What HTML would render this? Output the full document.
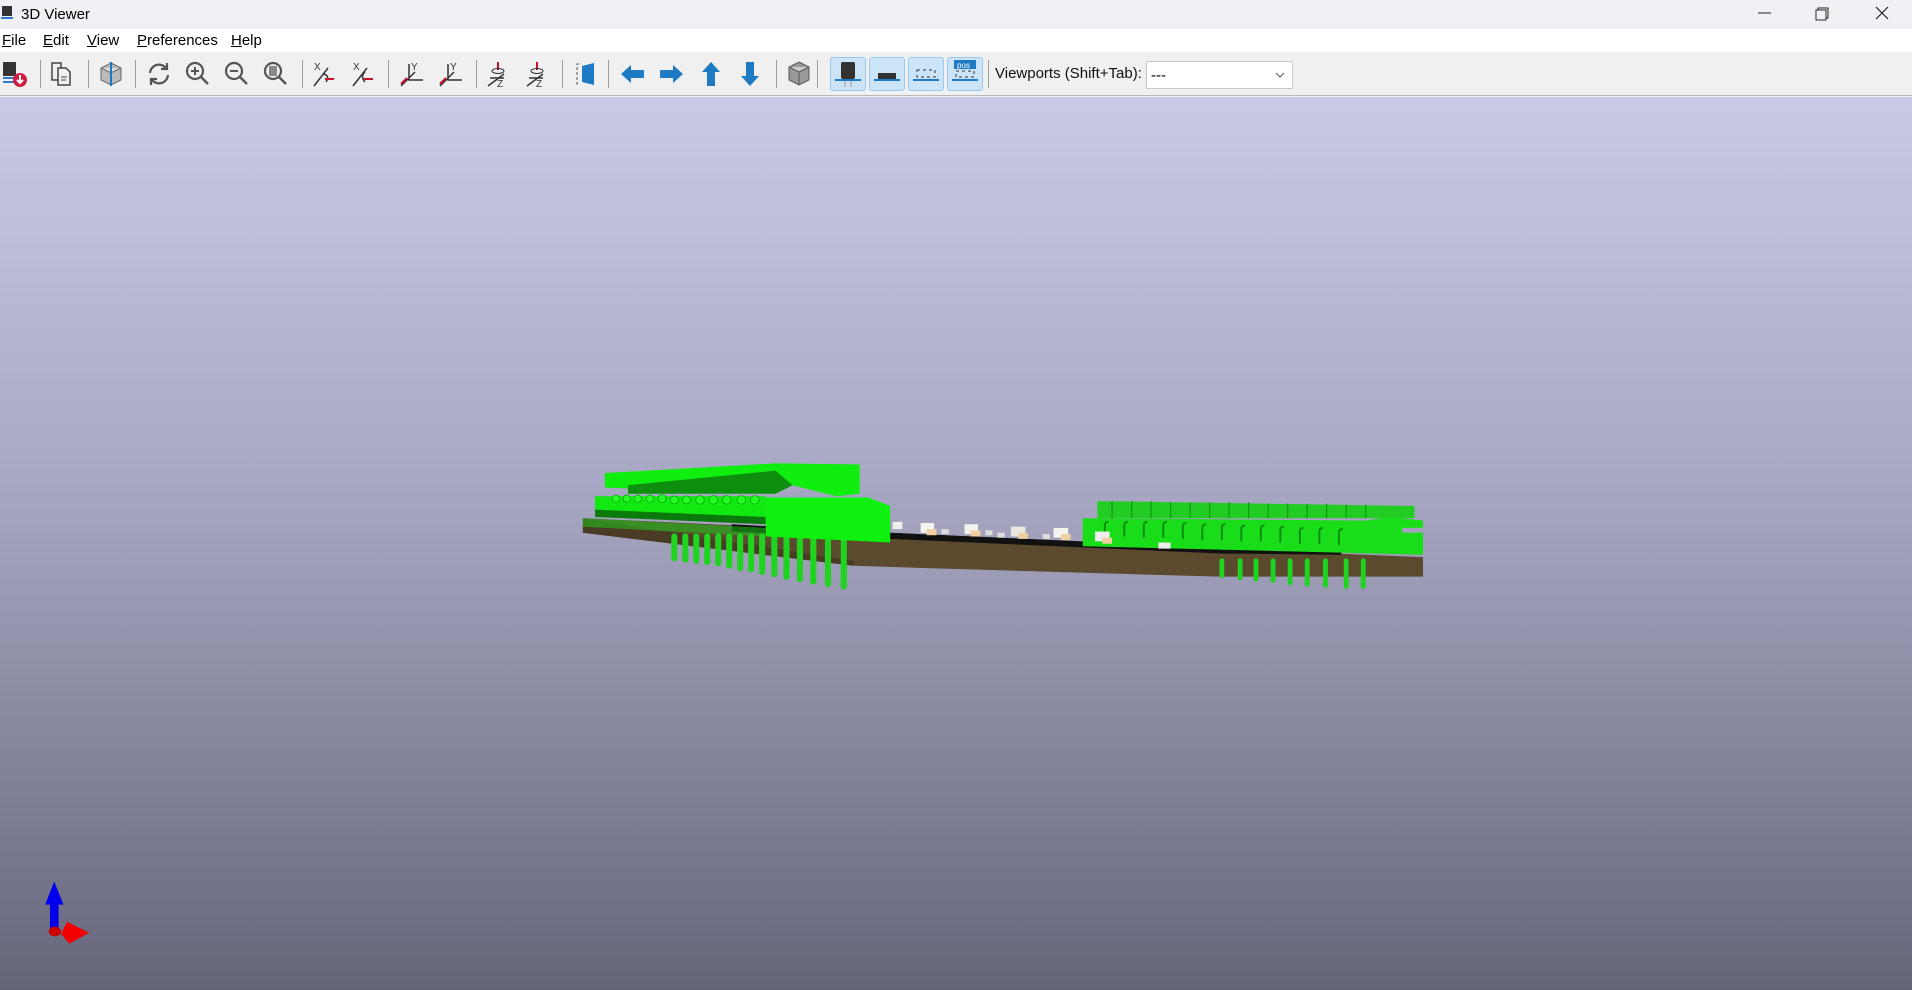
<!DOCTYPE html>
<html><head><meta charset="utf-8"><style>
*{margin:0;padding:0;box-sizing:border-box}
body{width:1912px;height:990px;overflow:hidden;font-family:"Liberation Sans",sans-serif;background:#f0f0f0;position:relative}
#title{position:absolute;left:0;top:0;width:1912px;height:29px;background:#eff1f5;font-size:15px}
#menu{position:absolute;left:0;top:29px;width:1912px;height:23px;background:#fff;font-size:15px}
#menu span{position:absolute;top:3px}
#tb{position:absolute;left:0;top:52px;width:1912px;height:44px;background:#f0f0f0;border-bottom:1px solid #b8b8b8}
#vp{position:absolute;left:0;top:97px;width:1912px;height:893px;background:linear-gradient(#cacae6,#a6a6c2 45%,#65657a)}
.sep{position:absolute;top:8px;width:1px;height:28px;background:#a0a0a0}
.ic{position:absolute;top:8px}
.tg{position:absolute;top:5px;width:36px;height:34px;background:#cce4f7;border:1px solid #99c9ef;border-radius:3px}
</style></head><body>
<div id="title">
<svg style="position:absolute;left:1px;top:6px" width="12" height="16"><rect x="1" y="0" width="10" height="10" fill="#333"/><rect x="0" y="11" width="12" height="2" fill="#2a7bd0"/></svg>
<span style="position:absolute;left:21px;top:6px">3D Viewer</span>
<svg style="position:absolute;left:1756px;top:6px" width="150" height="18"><line x1="2" y1="7" x2="15" y2="7" stroke="#222" stroke-width="1"/><rect x="60" y="4" width="10" height="10" fill="none" stroke="#222"/><path d="M62 4V2h10v10h-2" fill="none" stroke="#222"/><path d="M120 1l12 12M132 1l-12 12" stroke="#222" stroke-width="1.2"/></svg>
</div>
<div id="menu">
<span style="left:2px"><u>F</u>ile</span><span style="left:43px"><u>E</u>dit</span><span style="left:87px"><u>V</u>iew</span><span style="left:137px"><u>P</u>references</span><span style="left:231px"><u>H</u>elp</span>
</div>
<div id="tb">
<svg class="ic" style="left:1px" width="28" height="28"><rect x="2" y="2" width="13" height="14" fill="#333"/><rect x="2" y="17" width="14" height="2" fill="#2a7bd0"/><rect x="2" y="21" width="14" height="2" fill="#2a7bd0"/><circle cx="19" cy="20" r="7" fill="#d01f3c"/><path d="M19 15v8M16 20l3 3 3-3" stroke="#fff" stroke-width="2" fill="none"/></svg>
<div class="sep" style="left:40px"></div>
<svg class="ic" style="left:49px" width="26" height="28"><path d="M3 3h9v17H3z" fill="none" stroke="#444" stroke-width="1.5"/><path d="M9 8h8l4 4v13H9z" fill="#f0f0f0" stroke="#444" stroke-width="1.5"/><path d="M12 17h6M12 20h5" stroke="#444"/></svg>
<div class="sep" style="left:88px"></div>
<svg class="ic" style="left:98px" width="26" height="28"><path d="M13 3l10 5v12l-10 5-10-5V8z" fill="#bbb" stroke="#666"/><path d="M3 8l10 5 10-5" fill="#ddd" stroke="#666"/><line x1="13" y1="2" x2="13" y2="26" stroke="#1f7ac4" stroke-width="2"/></svg>
<div class="sep" style="left:135px"></div>
<svg class="ic" style="left:145px" width="28" height="28"><path d="M5 13a9 9 0 0 1 16-5M23 15a9 9 0 0 1-16 5" fill="none" stroke="#555" stroke-width="2.2"/><path d="M22 3v6h-6M6 25v-6h6" fill="none" stroke="#555" stroke-width="2.2"/></svg>
<svg class="ic" style="left:184px" width="28" height="28"><circle cx="11" cy="11" r="8" fill="none" stroke="#555" stroke-width="2.2"/><path d="M17 17l7 7" stroke="#555" stroke-width="2.5"/><path d="M7 11h8M11 7v8" stroke="#555" stroke-width="2"/></svg>
<svg class="ic" style="left:223px" width="28" height="28"><circle cx="11" cy="11" r="8" fill="none" stroke="#555" stroke-width="2.2"/><path d="M17 17l7 7" stroke="#555" stroke-width="2.5"/><path d="M7 11h8" stroke="#555" stroke-width="2"/></svg>
<svg class="ic" style="left:262px" width="28" height="28"><circle cx="11" cy="11" r="8" fill="none" stroke="#555" stroke-width="2.2"/><path d="M17 17l7 7" stroke="#555" stroke-width="2.5"/><rect x="7" y="6" width="8" height="10" fill="#888"/></svg>
<div class="sep" style="left:302px"></div>
<svg class="ic" style="left:310px" width="30" height="28"><text x="4" y="10" font-size="10" fill="#333" font-family="Liberation Sans">X</text><path d="M4 26L18 8M14 14q6 2 2 8" stroke="#333" stroke-width="1.5" fill="none"/><path d="M15 19h9" stroke="#c8102e" stroke-width="2"/></svg>
<svg class="ic" style="left:349px" width="30" height="28"><text x="4" y="10" font-size="10" fill="#333" font-family="Liberation Sans">X</text><path d="M4 26L18 8M16 12q-5 4 0 10" stroke="#333" stroke-width="1.5" fill="none"/><path d="M15 19h9" stroke="#c8102e" stroke-width="2"/></svg>
<div class="sep" style="left:388px"></div>
<svg class="ic" style="left:397px" width="30" height="28"><text x="14" y="10" font-size="10" fill="#333" font-family="Liberation Sans">Y</text><path d="M12 4v16h14M4 26L18 12" stroke="#333" stroke-width="1.5" fill="none"/><path d="M4 24l6-6" stroke="#c8102e" stroke-width="2"/></svg>
<svg class="ic" style="left:436px" width="30" height="28"><text x="14" y="10" font-size="10" fill="#333" font-family="Liberation Sans">Y</text><path d="M12 4v16h14M4 26L18 12" stroke="#333" stroke-width="1.5" fill="none"/><path d="M4 24l6-6" stroke="#c8102e" stroke-width="2"/></svg>
<div class="sep" style="left:476px"></div>
<svg class="ic" style="left:484px" width="30" height="28"><path d="M14 2v8" stroke="#c8102e" stroke-width="2"/><ellipse cx="14" cy="11" rx="6" ry="2.5" fill="none" stroke="#333"/><path d="M4 26l16-12M6 18h14" stroke="#333" stroke-width="1.5"/><text x="13" y="27" font-size="10" fill="#333" font-family="Liberation Sans">Z</text></svg>
<svg class="ic" style="left:523px" width="30" height="28"><path d="M14 2v8" stroke="#c8102e" stroke-width="2"/><ellipse cx="14" cy="11" rx="6" ry="2.5" fill="none" stroke="#333"/><path d="M4 26l16-12M6 18h14" stroke="#333" stroke-width="1.5"/><text x="13" y="27" font-size="10" fill="#333" font-family="Liberation Sans">Z</text></svg>
<div class="sep" style="left:562px"></div>
<svg class="ic" style="left:573px" width="26" height="28"><path d="M6 4h-2v20h2" fill="none" stroke="#555" stroke-dasharray="3 2"/><path d="M9 6l12-3v22l-12-3z" fill="#1f7ac4"/></svg>
<div class="sep" style="left:608px"></div>
<svg class="ic" style="left:619px" width="28" height="28"><path d="M2 14l10-9v5h13v8H12v5z" fill="#1f7ac4"/></svg>
<svg class="ic" style="left:657px" width="28" height="28"><path d="M26 14l-10-9v5H3v8h13v5z" fill="#1f7ac4"/></svg>
<svg class="ic" style="left:697px" width="28" height="28"><path d="M14 2l9 10h-5v14h-8V12H5z" fill="#1f7ac4"/></svg>
<svg class="ic" style="left:736px" width="28" height="28"><path d="M14 26l9-10h-5V2h-8v14H5z" fill="#1f7ac4"/></svg>
<div class="sep" style="left:776px"></div>
<svg class="ic" style="left:786px" width="26" height="28"><path d="M13 2l10 5v13l-10 5-10-5V7z" fill="#999" stroke="#555"/><path d="M3 7l10 5 10-5M13 12v13" fill="#ccc" stroke="#555"/></svg>
<div class="sep" style="left:817px"></div>
<div class="tg" style="left:830px"><svg width="34" height="32"><rect x="10" y="4" width="14" height="17" rx="2" fill="#333"/><rect x="4" y="21" width="26" height="2" fill="#1f7ac4"/><path d="M14 23v6M20 23v6" stroke="#999"/></svg></div>
<div class="tg" style="left:869px"><svg width="34" height="32"><rect x="8" y="15" width="18" height="6" fill="#333"/><rect x="4" y="21" width="26" height="2" fill="#1f7ac4"/></svg></div>
<div class="tg" style="left:908px"><svg width="34" height="32"><rect x="8" y="12" width="18" height="7" fill="none" stroke="#333" stroke-dasharray="3 3"/><rect x="4" y="21" width="26" height="2" fill="#1f7ac4"/></svg></div>
<div class="tg" style="left:947px"><svg width="34" height="32"><rect x="6" y="2" width="22" height="9" fill="#1f7ac4"/><text x="9" y="10" font-size="8" fill="#fff" font-family="Liberation Sans">pos</text><rect x="8" y="13" width="18" height="6" fill="none" stroke="#333" stroke-dasharray="3 3"/><rect x="4" y="21" width="26" height="2" fill="#1f7ac4"/></svg></div>
<div class="sep" style="left:988px"></div>
<span style="position:absolute;left:995px;top:13px;font-size:15px;color:#111">Viewports (Shift+Tab):</span>
<div style="position:absolute;left:1146px;top:9px;width:147px;height:28px;background:#fff;border:1px solid #c8c8c8;font-size:15px;padding:5px 4px">---<svg style="position:absolute;right:7px;top:10px" width="10" height="7"><path d="M1 1l4 4 4-4" stroke="#555" fill="none"/></svg></div>
</div>
<div id="vp"></div>
<svg style="position:absolute;left:0;top:0" width="1912" height="990" viewBox="0 0 1568 812" preserveAspectRatio="none">
<polygon points="478,425 730,437 1000,450 1167,457 1167,473 1000,473 760,466 700,464 478,437" fill="#5b4a2e"/>
<polygon points="600,430 730,437 1000,449 1100,452 1100,455 1000,454 730,442 600,436" fill="#111"/>
<polygon points="478,425 478,437 700,464 700,460" fill="#4a3c24"/>
<g stroke="#1ed41e" stroke-width="5" stroke-linecap="round">
<line x1="553" y1="440" x2="553" y2="458"/><line x1="562" y1="440" x2="562" y2="459"/><line x1="571" y1="440" x2="571" y2="460"/><line x1="580" y1="440" x2="580" y2="461"/><line x1="589" y1="440" x2="589" y2="462"/><line x1="598" y1="440" x2="598" y2="464"/><line x1="607" y1="440" x2="607" y2="466"/><line x1="616" y1="440" x2="616" y2="467"/><line x1="625" y1="440" x2="625" y2="469"/><line x1="635" y1="440" x2="635" y2="471"/><line x1="645" y1="440" x2="645" y2="473"/><line x1="656" y1="440" x2="656" y2="475"/><line x1="667" y1="440" x2="667" y2="477"/><line x1="679" y1="440" x2="679" y2="479"/><line x1="692" y1="440" x2="692" y2="481"/>
</g>
<g stroke="#1ed41e" stroke-width="4" stroke-linecap="round">
<line x1="1002" y1="460" x2="1002" y2="472"/><line x1="1017" y1="460" x2="1017" y2="474"/><line x1="1030" y1="460" x2="1030" y2="475"/><line x1="1044" y1="460" x2="1044" y2="476"/><line x1="1058" y1="460" x2="1058" y2="478"/><line x1="1072" y1="460" x2="1072" y2="479"/><line x1="1087" y1="460" x2="1087" y2="480"/><line x1="1104" y1="460" x2="1104" y2="481"/><line x1="1118" y1="460" x2="1118" y2="481"/>
</g>
<polygon points="496,388 636,380 705,381 705,405 686,407 650,398 636,405 496,400" fill="#10ee10"/>
<polygon points="515,398 636,386 650,398 636,405 515,405" fill="#0d8f0d"/>
<polygon points="488,407 628,407 628,425 488,420" fill="#12e812"/>
<polygon points="488,418 628,424 628,430 488,424" fill="#0a7a0a"/>
<g fill="#22ff22" stroke="#0c9c0c" stroke-width="0.6">
<circle cx="505" cy="409" r="3"/><circle cx="514" cy="409" r="3"/><circle cx="523" cy="409" r="3"/><circle cx="533" cy="409" r="3"/><circle cx="543" cy="409" r="3.3"/><circle cx="553" cy="410" r="3.3"/><circle cx="563" cy="410" r="3.3"/><circle cx="574" cy="410" r="3.5"/><circle cx="585" cy="410" r="3.5"/><circle cx="596" cy="410" r="3.5"/><circle cx="608" cy="410" r="3.5"/><circle cx="619" cy="410" r="3.5"/>
</g>
<polygon points="628,408 712,408 730,415 730,445 628,440" fill="#0ef00e"/>
<polygon points="478,425 628,433 628,440 478,432" fill="#1ad41a" opacity=".5"/>
<polygon points="900,411 1160,415 1160,425 900,425" fill="#22cc22"/>
<g stroke="#0e9a0e" stroke-width="1"><line x1="912" y1="411" x2="912" y2="425"/><line x1="928" y1="411" x2="928" y2="425"/><line x1="944" y1="411" x2="944" y2="425"/><line x1="960" y1="412" x2="960" y2="425"/><line x1="976" y1="412" x2="976" y2="425"/><line x1="992" y1="412" x2="992" y2="425"/><line x1="1008" y1="412" x2="1008" y2="425"/><line x1="1024" y1="412" x2="1024" y2="425"/><line x1="1040" y1="413" x2="1040" y2="425"/><line x1="1056" y1="413" x2="1056" y2="425"/><line x1="1072" y1="413" x2="1072" y2="425"/><line x1="1088" y1="413" x2="1088" y2="425"/><line x1="1104" y1="414" x2="1104" y2="425"/><line x1="1120" y1="414" x2="1120" y2="425"/></g>
<polygon points="888,425 1120,427 1140,424 1167,427 1167,433 1150,433 1150,437 1167,437 1167,455 888,448" fill="#18dd18"/>
<g fill="none" stroke="#0d8a0d" stroke-width="1.6"><path d="M906 438v-7q0-3 3-3"/><path d="M922 440v-9q0-3 3-3"/><path d="M938 441v-10q0-3 3-3"/><path d="M954 441v-10q0-3 3-3"/><path d="M970 442v-10q0-3 3-3"/><path d="M986 443v-10q0-3 3-3"/><path d="M1002 443v-10q0-3 3-3"/><path d="M1018 444v-10q0-3 3-3"/><path d="M1034 444v-10q0-3 3-3"/><path d="M1050 445v-10q0-3 3-3"/><path d="M1066 446v-10q0-3 3-3"/><path d="M1082 446v-10q0-3 3-3"/><path d="M1098 447v-10q0-3 3-3"/></g>
<g>
<rect x="732" y="428" width="8" height="6" fill="#eee"/>
<rect x="755" y="429" width="11" height="8" fill="#f4f4ee"/><rect x="760" y="434" width="8" height="5" fill="#f0d0a0"/><rect x="772" y="434" width="6" height="4" fill="#ddd"/>
<rect x="791" y="430" width="11" height="8" fill="#f4f4ee"/><rect x="796" y="435" width="8" height="5" fill="#f0d0a0"/><rect x="808" y="435" width="6" height="4" fill="#ddd"/>
<rect x="829" y="432" width="12" height="8" fill="#e8e8e0"/><rect x="835" y="437" width="8" height="5" fill="#f0d0a0"/><rect x="818" y="437" width="6" height="4" fill="#ddd"/>
<rect x="864" y="433" width="12" height="8" fill="#f4f4ee"/><rect x="870" y="438" width="8" height="5" fill="#f0d0a0"/><rect x="855" y="438" width="6" height="4" fill="#ddd"/>
<rect x="898" y="436" width="12" height="8" fill="#eee"/><rect x="904" y="441" width="8" height="5" fill="#f0d0a0"/>
<rect x="950" y="445" width="10" height="5" fill="#eee"/>
</g>
<rect x="41" y="740" width="7" height="26" fill="#0000e8"/>
<polygon points="44.5,723 37,742 52,742" fill="#0000f0"/>
<ellipse cx="45" cy="764" rx="5" ry="4" fill="#c00"/>
<polygon points="55,756 73,765 57,774 50,766" fill="#f20000"/>
</svg>
</body></html>
